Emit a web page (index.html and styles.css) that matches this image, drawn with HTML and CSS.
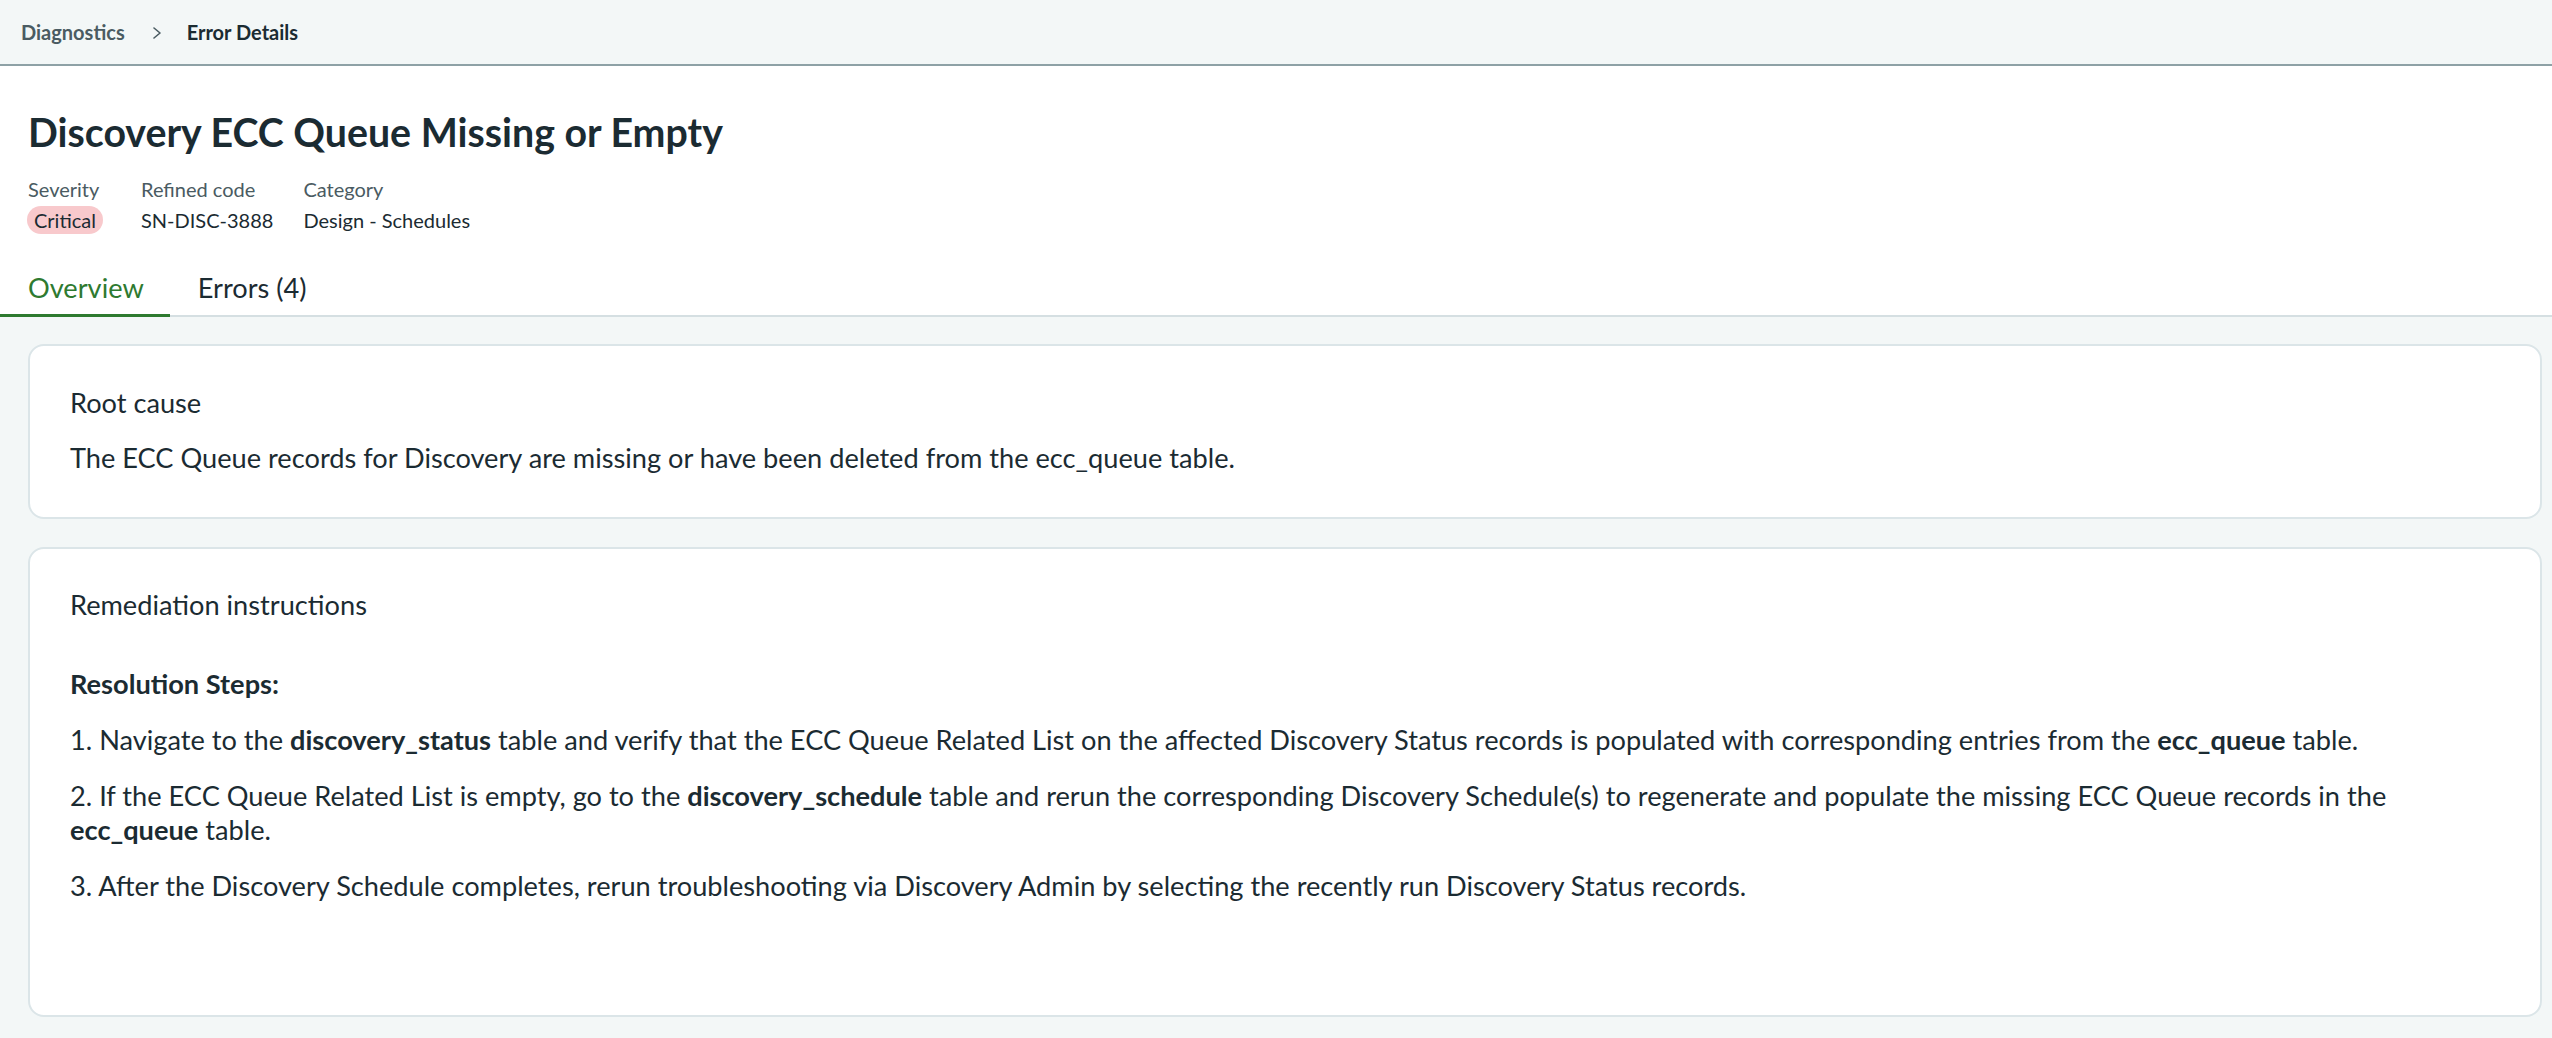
FILE: index.html
```html
<!DOCTYPE html>
<html lang="en">

<head>
    <meta charset="UTF-8">
    <meta name="viewport" content="width=device-width, initial-scale=1.0">
    <title>Error Details</title>
    <link rel="stylesheet" href="styles.css">
</head>

<body>
    <!-- Breadcrumb -->
    <div class="breadcrumb">
        <a href="#diagnostics" class="crumb">Diagnostics</a>
        <svg class="crumb-sep" width="10" height="12" viewBox="0 0 10 12" aria-hidden="true">
            <path d="M2 1 L8 6 L2 11" fill="none" stroke="#4a5b62" stroke-width="1.6" stroke-linecap="round" stroke-linejoin="round"/>
        </svg>
        <span class="crumb current">Error Details</span>
    </div>

    <!-- Header -->
    <div class="header">
        <h1 class="title">Discovery ECC Queue Missing or Empty</h1>

        <div class="meta">
            <div class="meta-item">
                <span class="meta-label">Severity</span>
                <span class="meta-value badge">Critical</span>
            </div>
            <div class="meta-item">
                <span class="meta-label">Refined code</span>
                <span class="meta-value">SN-DISC-3888</span>
            </div>
            <div class="meta-item">
                <span class="meta-label">Category</span>
                <span class="meta-value">Design - Schedules</span>
            </div>
        </div>

        <!-- Tabs -->
        <ul class="tabs">
            <li class="tab active">Overview</li>
            <li class="tab">Errors (4)</li>
        </ul>
    </div>

    <!-- Content -->
    <div class="content">
        <div class="card">
            <h2 class="card-title">Root cause</h2>
            <p class="card-text">The ECC Queue records for Discovery are missing or have been deleted from the ecc_queue table.</p>
        </div>

        <div class="card remediation">
            <h2 class="card-title">Remediation instructions</h2>
            <div class="steps">
                <h3 class="steps-title">Resolution Steps:</h3>
                <p class="card-text">1. Navigate to the <b>discovery_status</b> table and verify that the ECC Queue Related List on the affected Discovery Status records is populated with corresponding entries from the <b>ecc_queue</b> table.</p>
                <p class="card-text">2. If the ECC Queue Related List is empty, go to the <b>discovery_schedule</b> table and rerun the corresponding Discovery Schedule(s) to regenerate and populate the missing ECC Queue records in the <b>ecc_queue</b> table.</p>
                <p class="card-text">3. After the Discovery Schedule completes, rerun troubleshooting via Discovery Admin by selecting the recently run Discovery Status records.</p>
            </div>
        </div>
    </div>
</body>

</html>
```

FILE: styles.css
```css
body {
    margin: 0;
    font-family: Lato, "Open Sans", sans-serif;
    color: #1b2b32;
    background-color: #f3f7f7;
}

/* Breadcrumb */
.breadcrumb {
    display: flex;
    align-items: center;
    height: 64px;
    padding: 0 21px;
    background-color: #f3f7f7;
    border-bottom: 2px solid #8ea1a6;
    font-size: 20px;
    font-weight: bold;
}

.breadcrumb .crumb {
    color: #4a5b62;
    text-decoration: none;
}

.breadcrumb .crumb-sep {
    margin: 1px 25px 0 27px;
}

.breadcrumb .current {
    color: #1b2b32;
}

/* Header */
.header {
    background-color: #fff;
    padding-top: 42px;
    border-bottom: 2px solid #d5dfe2;
}

.title {
    margin: 0 28px;
    font-size: 39.3px;
    line-height: 48px;
    font-weight: bold;
}

.meta {
    display: flex;
    gap: 29px;
    margin: 19px 27px 0;
}

.meta-item {
    display: flex;
    flex-direction: column;
    align-items: flex-start;
    min-width: 84px;
    gap: 3px;
}

.meta-label {
    margin-left: 1px;
    font-size: 20px;
    line-height: 28px;
    color: #4a5b62;
}

.meta-value {
    margin-left: 1px;
    font-size: 20px;
    line-height: 28px;
}

.badge {
    margin-left: 0;
    background-color: #f8c9cc;
    border-radius: 14px;
    padding: 0 7px;
}

/* Tabs */
.tabs {
    display: flex;
    list-style: none;
    margin: 28px 0 0;
    padding: 0;
}

.tab {
    padding: 10px 26px 10px 28px;
    font-size: 27.2px;
    line-height: 32px;
    border-bottom: 3px solid transparent;
    margin-bottom: -2px;
}

.tab.active {
    color: #2e7a30;
    border-bottom-color: #2e7a30;
}

/* Cards */
.content {
    padding: 27px 10px 22px 28px;
    display: flex;
    flex-direction: column;
    gap: 28px;
}

.card {
    background-color: #fff;
    border: 2px solid #dbe5e8;
    border-radius: 16px;
    padding: 40px 40px 42px;
}

.card.remediation {
    padding-top: 39px;
}

.card-title {
    margin: 0;
    font-size: 27.2px;
    line-height: 34px;
    font-weight: normal;
}

.card-text {
    margin: 21px 0 0;
    font-size: 27.2px;
    line-height: 34px;
}

.steps {
    margin-top: 45px;
    margin-bottom: 70px;
}

.steps-title {
    margin: 0;
    font-size: 27.2px;
    line-height: 34px;
    font-weight: bold;
}

.steps .card-text {
    margin-top: 22px;
}
```
